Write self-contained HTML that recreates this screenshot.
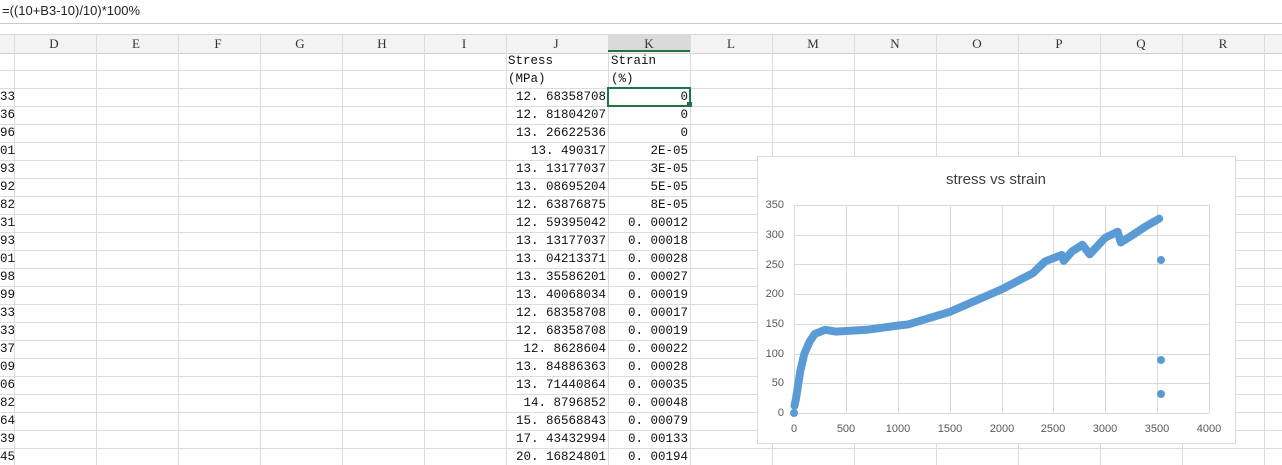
<!DOCTYPE html>
<html><head><meta charset="utf-8"><style>
body{margin:0;width:1282px;height:465px;overflow:hidden;background:#fff;font-family:"Liberation Sans",sans-serif;position:relative}
.fb{position:absolute;left:0;top:0;width:1282px;height:23px;border-bottom:1px solid #c8c8c8;font-size:13px;line-height:22px;padding-left:2px;color:#222}
.hdr{position:absolute;left:0;top:34px;width:1282px;height:18px;background:#f3f3f3;border-bottom:1px solid #d0d0d0;border-top:1px solid #d9d9d9}
.t{position:absolute;font-family:"Liberation Mono","Noto Sans CJK SC",monospace;font-size:12.5px;color:#111;white-space:pre}
</style></head><body>
<div class="fb">=((10+B3-10)/10)*100%</div>
<div class="hdr"></div>
<svg style="position:absolute;left:0;top:0" width="1282" height="465">
<g stroke="#dcdcdc" stroke-width="1">
<line x1="14.5" y1="34" x2="14.5" y2="465"/><line x1="96.5" y1="34" x2="96.5" y2="465"/><line x1="178.5" y1="34" x2="178.5" y2="465"/><line x1="260.5" y1="34" x2="260.5" y2="465"/><line x1="342.5" y1="34" x2="342.5" y2="465"/><line x1="424.5" y1="34" x2="424.5" y2="465"/><line x1="506.5" y1="34" x2="506.5" y2="465"/><line x1="608.5" y1="34" x2="608.5" y2="465"/><line x1="690.5" y1="34" x2="690.5" y2="465"/><line x1="772.5" y1="34" x2="772.5" y2="465"/><line x1="854.5" y1="34" x2="854.5" y2="465"/><line x1="936.5" y1="34" x2="936.5" y2="465"/><line x1="1018.5" y1="34" x2="1018.5" y2="465"/><line x1="1100.5" y1="34" x2="1100.5" y2="465"/><line x1="1182.5" y1="34" x2="1182.5" y2="465"/><line x1="1264.5" y1="34" x2="1264.5" y2="465"/>
<line x1="0" y1="70.5" x2="1282" y2="70.5"/><line x1="0" y1="88.5" x2="1282" y2="88.5"/><line x1="0" y1="106.5" x2="1282" y2="106.5"/><line x1="0" y1="124.5" x2="1282" y2="124.5"/><line x1="0" y1="142.5" x2="1282" y2="142.5"/><line x1="0" y1="160.5" x2="1282" y2="160.5"/><line x1="0" y1="178.5" x2="1282" y2="178.5"/><line x1="0" y1="196.5" x2="1282" y2="196.5"/><line x1="0" y1="214.5" x2="1282" y2="214.5"/><line x1="0" y1="232.5" x2="1282" y2="232.5"/><line x1="0" y1="250.5" x2="1282" y2="250.5"/><line x1="0" y1="268.5" x2="1282" y2="268.5"/><line x1="0" y1="286.5" x2="1282" y2="286.5"/><line x1="0" y1="304.5" x2="1282" y2="304.5"/><line x1="0" y1="322.5" x2="1282" y2="322.5"/><line x1="0" y1="340.5" x2="1282" y2="340.5"/><line x1="0" y1="358.5" x2="1282" y2="358.5"/><line x1="0" y1="376.5" x2="1282" y2="376.5"/><line x1="0" y1="394.5" x2="1282" y2="394.5"/><line x1="0" y1="412.5" x2="1282" y2="412.5"/><line x1="0" y1="430.5" x2="1282" y2="430.5"/><line x1="0" y1="448.5" x2="1282" y2="448.5"/>
</g>
<rect x="608" y="35" width="82" height="17" fill="#dadada"/>
<line x1="608" y1="51" x2="690" y2="51" stroke="#217346" stroke-width="2"/>
<g font-family="Liberation Serif,serif" font-size="13" fill="#333" text-anchor="middle">
<text x="54" y="48">D</text><text x="136" y="48">E</text><text x="218" y="48">F</text><text x="300" y="48">G</text><text x="382" y="48">H</text><text x="464" y="48">I</text><text x="556" y="48">J</text><text x="649" y="48">K</text><text x="731" y="48">L</text><text x="813" y="48">M</text><text x="895" y="48">N</text><text x="977" y="48">O</text><text x="1059" y="48">P</text><text x="1141" y="48">Q</text><text x="1223" y="48">R</text>
</g>
<rect x="608" y="88" width="82" height="18" fill="none" stroke="#217346" stroke-width="2"/>
<rect x="687" y="102" width="5" height="5" fill="#217346"/>
</svg>
<div class="t" style="left:508px;top:54px">Stress</div><div class="t" style="left:611px;top:54px">Strain</div>
<div class="t" style="left:508px;top:72px">(MPa)</div><div class="t" style="left:611px;top:72px">(%)</div>
<div id="rows"></div>
<div style="position:absolute;left:757px;top:156px;width:479px;height:288px;background:#fff;border:1px solid #d9d9d9;box-sizing:border-box"></div>
<svg style="position:absolute;left:0;top:0" width="1282" height="465">
<text x="996" y="184" text-anchor="middle" font-size="15" fill="#404040" font-family="Liberation Sans,sans-serif">stress vs strain</text>
<g stroke="#d9d9d9" stroke-width="1">
<line x1="794" y1="205.5" x2="1209" y2="205.5"/><line x1="794" y1="235.5" x2="1209" y2="235.5"/><line x1="794" y1="264.5" x2="1209" y2="264.5"/><line x1="794" y1="294.5" x2="1209" y2="294.5"/><line x1="794" y1="324.5" x2="1209" y2="324.5"/><line x1="794" y1="354.5" x2="1209" y2="354.5"/><line x1="794" y1="383.5" x2="1209" y2="383.5"/><line x1="794" y1="413.5" x2="1209" y2="413.5"/>
<line x1="794.5" y1="205" x2="794.5" y2="413"/><line x1="846.5" y1="205" x2="846.5" y2="413"/><line x1="898.5" y1="205" x2="898.5" y2="413"/><line x1="950.5" y1="205" x2="950.5" y2="413"/><line x1="1002.5" y1="205" x2="1002.5" y2="413"/><line x1="1053.5" y1="205" x2="1053.5" y2="413"/><line x1="1105.5" y1="205" x2="1105.5" y2="413"/><line x1="1157.5" y1="205" x2="1157.5" y2="413"/><line x1="1209.5" y1="205" x2="1209.5" y2="413"/>
</g>
<g font-size="11" fill="#595959" font-family="Liberation Sans,sans-serif" text-anchor="end">
<text x="784" y="208">350</text><text x="784" y="238">300</text><text x="784" y="268">250</text><text x="784" y="297">200</text><text x="784" y="327">150</text><text x="784" y="357">100</text><text x="784" y="386">50</text><text x="784" y="416">0</text>
</g>
<g font-size="11" fill="#595959" font-family="Liberation Sans,sans-serif" text-anchor="middle">
<text x="794" y="432">0</text><text x="846" y="432">500</text><text x="898" y="432">1000</text><text x="950" y="432">1500</text><text x="1002" y="432">2000</text><text x="1053" y="432">2500</text><text x="1105" y="432">3000</text><text x="1157" y="432">3500</text><text x="1209" y="432">4000</text>
</g>
<g transform="translate(794,413) scale(0.10375,-0.5943)">
<path vector-effect="non-scaling-stroke" fill="none" stroke="#5b9bd5" stroke-width="8" stroke-linecap="round" stroke-linejoin="round" d="M5 12 L20 25 L60 70 L100 100 L150 120 L200 133 L300 140 L400 137 L700 140 L1000 147 L1100 149 L1500 170 L2000 208 L2300 235 L2420 255 L2580 266 L2600 256 L2680 272 L2780 283 L2850 267 L3000 295 L3120 305 L3150 287 L3250 298 L3400 315 L3520 327"/>
</g>
<g fill="#5b9bd5"><circle cx="1161" cy="260" r="4"/><circle cx="1161" cy="360" r="4"/><circle cx="1161" cy="394" r="4"/><circle cx="794" cy="413" r="4"/></g>
</svg>
<script>
var L=["33","36","96","01","93","92","82","31","93","01","98","99","33","33","37","09","06","82","64","39","45"];
var J=["12.68358708","12.81804207","13.26622536","13.490317","13.13177037","13.08695204","12.63876875","12.59395042","13.13177037","13.04213371","13.35586201","13.40068034","12.68358708","12.68358708","12.8628604","13.84886363","13.71440864","14.8796852","15.86568843","17.43432994","20.16824801"];
var K=["0","0","0","2E-05","3E-05","5E-05","8E-05","0.00012","0.00018","0.00028","0.00027","0.00019","0.00017","0.00019","0.00022","0.00028","0.00035","0.00048","0.00079","0.00133","0.00194"];
var h="";
for(var i=0;i<21;i++){var y=90+i*18;
h+='<div class="t" style="left:0;top:'+y+'px">'+L[i]+'</div>';
h+='<div class="t" style="right:'+(1282-606)+'px;top:'+y+'px">'+J[i].replace(".",". ")+'</div>';
h+='<div class="t" style="right:'+(1282-688)+'px;top:'+y+'px">'+K[i].replace(".",". ")+'</div>';}
document.getElementById("rows").innerHTML=h;
</script>
</body></html>
